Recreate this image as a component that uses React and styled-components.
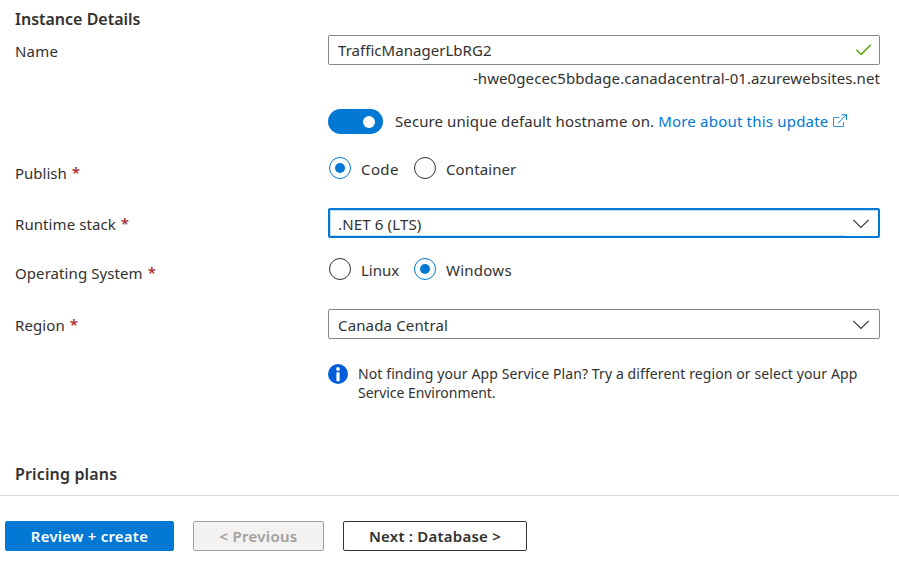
import React from "react";
import styled, { createGlobalStyle } from "styled-components";

const GlobalStyle = createGlobalStyle`
  * { box-sizing: border-box; }
  body {
    margin: 0;
    background: #fff;
    color: #323130;
    font-family: "Noto Sans", "Open Sans", sans-serif;
    font-size: 15px;
    line-height: 20px;
    overflow: hidden;
  }
`;

const Page = styled.main`
  display: flex;
  flex-direction: column;
  width: 899px;
  height: 561px;
`;

const Form = styled.section`
  display: flex;
  flex-direction: column;
  height: 495px;
  padding: 8px 19px 0 15px;
`;

const Heading = styled.h2`
  margin: 0;
  height: 22px;
  font-size: 16px;
  line-height: 22px;
  font-weight: 600;
  white-space: nowrap;
  letter-spacing: ${(p) => p.$track || 0}px;
`;

const Row = styled.div`
  display: grid;
  grid-template-columns: 313px 552px;
  align-items: start;
  height: ${(p) => p.$height}px;
  margin-top: ${(p) => p.$gap || 0}px;
`;

const Label = styled.label`
  display: flex;
  gap: 5px;
  padding-top: ${(p) => (p.$offset === undefined ? 6 : p.$offset)}px;
`;

const Text = styled.span`
  white-space: nowrap;
  letter-spacing: ${(p) => p.$track || 0}px;
`;

const Required = styled.span`
  color: #a4262c;
  font-size: 15px;
  font-weight: 500;
  line-height: 18px;
`;

const Field = styled.div`
  display: flex;
  align-items: center;
  justify-content: space-between;
  height: 30px;
  padding: ${(p) => (p.$select ? "2px" : "0")} ${(p) => (p.$focused ? "8px" : p.$select ? "9px" : "7px")} 0 ${(p) => (p.$focused ? "8px" : "9px")};
  border: ${(p) => (p.$focused ? "2px solid #0078d4" : "1px solid #8a8886")};
  border-radius: 2px;
  box-shadow: ${(p) => (p.$focused ? "inset 0 1px 0 #c7e0f4, inset 1px 0 0 #c7e0f4" : "none")};
  background: ${(p) =>
    p.$focused ? "linear-gradient(#c7e0f4, #c7e0f4) left bottom / 515px 1px no-repeat #fff" : "#fff"};
`;

const Suffix = styled.div`
  height: 20px;
  margin-top: 3px;
  text-align: right;
`;

const Inline = styled.div`
  display: flex;
  align-items: center;
  height: 25px;
`;

const Message = styled.div`
  display: flex;
  height: 22px;
`;

const Toggle = styled.span`
  display: flex;
  align-items: center;
  justify-content: flex-end;
  width: 55px;
  height: 25px;
  margin-right: 12px;
  padding-right: 8px;
  border-radius: 13px;
  background: #0078d4;
`;

const Knob = styled.span`
  width: 12px;
  height: 12px;
  border-radius: 50%;
  background: #fff;
`;

const Link = styled.a`
  display: flex;
  gap: 4px;
  margin-left: 4px;
  color: #0078d4;

  svg { margin-top: 3px; }
`;

const RadioGroup = styled.div`
  display: grid;
  grid-template-columns: 85px auto;
  justify-content: start;
  padding-left: 1px;
`;

const RadioOption = styled.label`
  display: grid;
  grid-template-columns: 22px auto;
  column-gap: 10px;
  height: 22px;
`;

const RadioCircle = styled.span`
  display: grid;
  place-items: center;
  width: 22px;
  height: 22px;
  border: 1px solid ${(p) => (p.$checked ? "#0078d4" : "#323130")};
  border-radius: 50%;
  &::after {
    content: "";
    width: 10px;
    height: 10px;
    border-radius: 50%;
    background: ${(p) => (p.$checked ? "#0078d4" : "transparent")};
  }
`;

const RadioText = styled(Text)`
  padding-top: 2px;
`;

const Notice = styled.div`
  display: grid;
  grid-template-columns: 20px auto;
  column-gap: 10px;
  font-size: 14px;
  line-height: 19px;
`;

const NoticeText = styled.div`
  display: flex;
  flex-direction: column;
`;

const Footer = styled.footer`
  display: flex;
  gap: 19px;
  height: 66px;
  padding: 25px 0 0 5px;
  border-top: 1px solid #dcdcdc;
`;

const variants = {
  primary: "background: #0078d4; border-color: #0078d4; color: #fff;",
  disabled: "background: #f3f2f1; border-color: #a19f9d; color: #a19f9d;",
  secondary: "background: #fff; border-color: #323130; color: #323130;",
};

const Button = styled.button`
  display: flex;
  align-items: center;
  justify-content: center;
  width: ${(p) => p.$width}px;
  height: 30px;
  padding: 0;
  border: 1px solid;
  border-radius: 2px;
  font: 600 15px/20px "Noto Sans", sans-serif;
  ${(p) => variants[p.$variant]}
`;

const Chevron = () => (
  <svg width="18" height="12" viewBox="0 0 18 12" fill="none" stroke="#323130" strokeWidth="1.1">
    <path d="M1.3 1.8 9 9.5 16.7 1.8" />
  </svg>
);

const Check = () => (
  <svg width="17" height="14" viewBox="0 0 17 14" fill="none" stroke="#57a300" strokeWidth="1.4">
    <path d="M1.4 6.7 6.2 11.4 15.8 1.7" />
  </svg>
);

const ExternalIcon = () => (
  <svg width="16" height="14" viewBox="0 0 16 14" fill="none" stroke="#0078d4">
    <path d="M7.5 3.5H1.5v9h10V8" strokeWidth="0.8" />
    <path d="M6 9.2 14.3.9M9.5.8h5v5" strokeWidth="1" />
  </svg>
);

const InfoIcon = () => (
  <svg width="20" height="20" viewBox="0 0 20 20">
    <circle cx="10" cy="10" r="10" fill="#015cda" />
    <circle cx="10" cy="5" r="1.9" fill="#fff" />
    <rect x="8.4" y="8.2" width="3.2" height="9" rx="0.6" fill="#fff" />
  </svg>
);

const FieldLabel = ({ children, track, offset }) => (
  <Label $offset={offset}>
    <Text $track={track}>{children}</Text>
    <Required>*</Required>
  </Label>
);

const Radio = ({ checked, track, children }) => (
  <RadioOption>
    <RadioCircle $checked={checked} />
    <RadioText $track={track}>{children}</RadioText>
  </RadioOption>
);

export default function App() {
  return (
    <Page>
      <GlobalStyle />
      <Form>
        <Heading>Instance Details</Heading>
        <Row $height={74} $gap={5}>
          <Label>
            <Text $track={0.2}>Name</Text>
          </Label>
          <div>
            <Field>
              <Text $track={0.04}>TrafficManagerLbRG2</Text>
              <Check />
            </Field>
            <Suffix>
              <Text $track={0.08}>-hwe0gecec5bbdage.canadacentral-01.azurewebsites.net</Text>
            </Suffix>
          </div>
        </Row>
        <Row $height={48}>
          <span />
          <Inline>
            <Toggle>
              <Knob />
            </Toggle>
            <Message>
              <Text $track={0.1}>Secure unique default hostname on.</Text>
              <Link>
                <Text $track={0.2}>More about this update</Text>
                <ExternalIcon />
              </Link>
            </Message>
          </Inline>
        </Row>
        <Row $height={51}>
          <FieldLabel>Publish</FieldLabel>
          <RadioGroup>
            <Radio checked track={0.4}>Code</Radio>
            <Radio track={0.1}>Container</Radio>
          </RadioGroup>
        </Row>
        <Row $height={50}>
          <FieldLabel track={0.08}>Runtime stack</FieldLabel>
          <Field $select $focused>
            <Text $track={0.15}>.NET 6 (LTS)</Text>
            <Chevron />
          </Field>
        </Row>
        <Row $height={51}>
          <FieldLabel offset={5} track={0.08}>Operating System</FieldLabel>
          <RadioGroup>
            <Radio>Linux</Radio>
            <Radio checked track={0.25}>Windows</Radio>
          </RadioGroup>
        </Row>
        <Row $height={55}>
          <FieldLabel track={0.1}>Region</FieldLabel>
          <Field $select>
            <Text $track={0.15}>Canada Central</Text>
            <Chevron />
          </Field>
        </Row>
        <Row $height={99}>
          <span />
          <Notice>
            <InfoIcon />
            <NoticeText>
              <Text $track={0.105}>Not finding your App Service Plan? Try a different region or select your App</Text>
              <Text $track={-0.05}>Service Environment.</Text>
            </NoticeText>
          </Notice>
        </Row>
        <Heading $track={0.15}>Pricing plans</Heading>
      </Form>
      <Footer>
        <Button $width={169} $variant="primary"><Text $track={0.22}>Review + create</Text></Button>
        <Button $width={131} $variant="disabled" disabled><Text $track={0.3}>&lt; Previous</Text></Button>
        <Button $width={184} $variant="secondary"><Text $track={0.22}>Next : Database &gt;</Text></Button>
      </Footer>
    </Page>
  );
}
